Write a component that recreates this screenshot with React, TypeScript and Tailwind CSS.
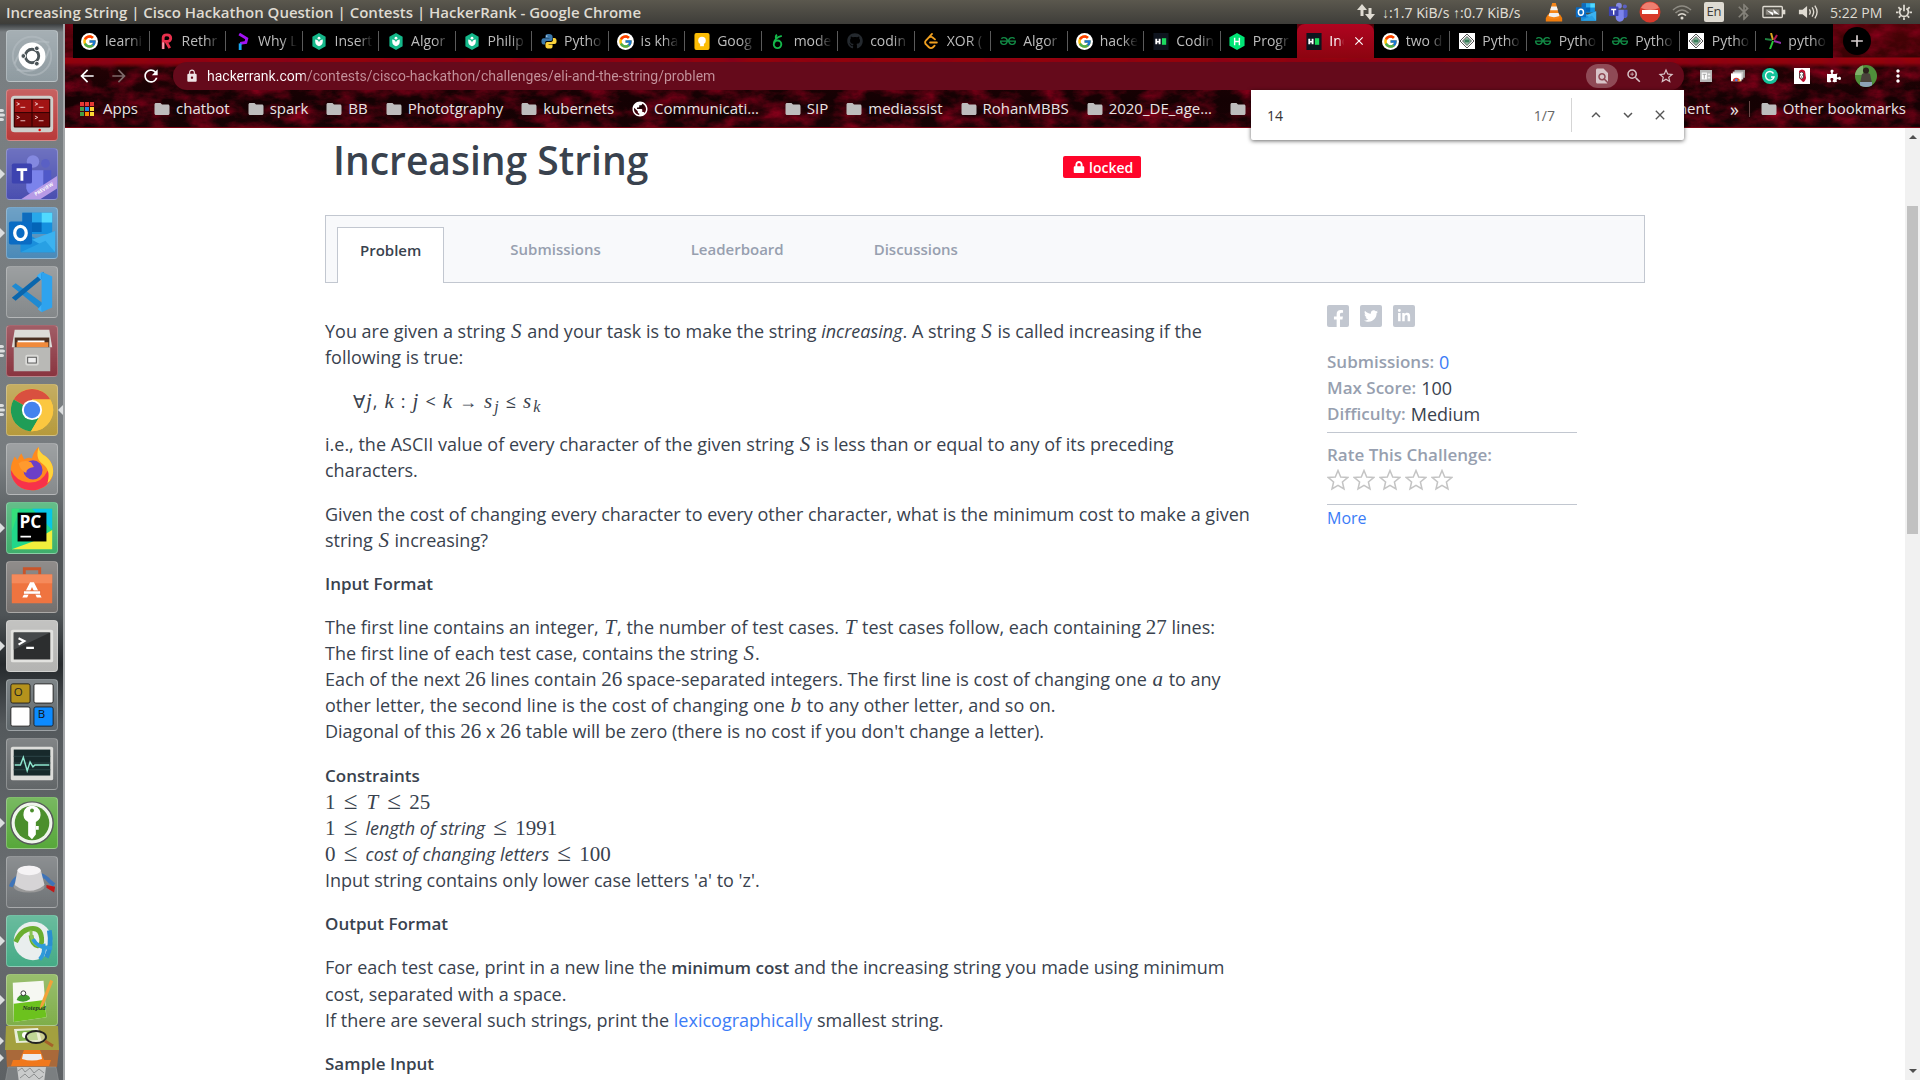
import React, { ReactNode } from "react";
import { FcGoogle } from "react-icons/fc";
import { FaGithub, FaPuzzlePiece, FaLock, FaTwitter, FaFacebookF, FaLinkedinIn } from "react-icons/fa";
import { SiGeeksforgeeks, SiLeetcode } from "react-icons/si";
import {
  MdFolder, MdFindInPage, MdOutlineZoomIn, MdStarOutline, MdMoreVert, MdArrowBack, MdArrowForward, MdRefresh,
  MdLock, MdAdd, MdClose, MdKeyboardArrowUp, MdKeyboardArrowDown, MdBluetooth, MdPublic,
} from "react-icons/md";

/* ---------- shared drawings ---------- */

const OutlookArt = () => (
  <g>
    <path d="M16 5h31v22H16z" fill="#1490df" />
    <path d="M16 5h10v10H16z" fill="#0f6cbd" />
    <path d="M26 5h10v10H26z" fill="#28a8ea" />
    <path d="M36 5h11v10H36z" fill="#50d9ff" />
    <path d="M26 15h10v10H26z" fill="#0364b8" />
    <path d="M14 23l18 10 18-9v22H14z" fill="#1a8fdc" />
    <path d="M50 24v22L26 33z" fill="#3bb2f0" />
    <path d="M14 46l26-12 10 12z" fill="#28a0e4" />
    <rect x="2" y="14" width="24" height="24" rx="2" fill="#0a6cc4" />
    <ellipse cx="14" cy="26" rx="6" ry="7" fill="none" stroke="#fff" strokeWidth="3.4" />
  </g>
);

const TeamsArt = () => (
  <g>
    <circle cx="27" cy="13" r="6.500" fill="#8489e0" />
    <circle cx="40" cy="15" r="4.500" fill="#5a60c4" />
    <path d="M20 22h18v15a9 9 0 0 1-18 4z" fill="#7b83eb" />
    <path d="M38 22h8v12a6 6 0 0 1-8 6z" fill="#5059c9" />
    <rect x="5" y="15" width="21" height="21" rx="2" fill="#3d43b0" />
    <path d="M10 20h11v3h-4v10h-3V23h-4z" fill="#fff" />
  </g>
);

const VlcArt = () => (
  <g>
    <path d="M8 38l5-8h26l5 8v8H8z" fill="#f07c0c" />
    <path d="M22 5h8l9 33q-13 6-26 0z" fill="#f4861a" />
    <path d="M20 13h12l2.500 8h-17zM16 27h20l2 7q-12 5-24 0z" fill="#f2f2f2" />
  </g>
);

/* ---------- top status bar ---------- */

function StatusBar() {
  return (
    <header className="flex h-6 shrink-0 items-center bg-gradient-to-b from-[#5b584e] to-[#3e3d39] pl-1.5 pr-2 font-['Open_Sans',sans-serif] text-[15px] text-[#dfdbd2]">
      <h2 className="flex-1 truncate font-semibold leading-6">Increasing String | Cisco Hackathon Question | Contests | HackerRank - Google Chrome</h2>
      <div className="flex items-center">
        <svg viewBox="0 0 20 16" className="mr-1.5 h-4 w-5" fill="#dfdbd2"><path d="M6 0l5 6H7.500v6h-3V6H1zM14 16l-5-6h3.500V4h3v6H19z" /></svg>
        <span className="w-[156px] whitespace-nowrap font-['Noto_Sans',sans-serif] text-[14px]">↓:1.7 KiB/s ↑:0.7 KiB/s</span>
        <span className="flex w-8 justify-center"><svg viewBox="6 3 40 44" className="h-5 w-5"><VlcArt /></svg></span>
        <span className="flex w-8 justify-center"><svg viewBox="0 3 52 45" className="h-5 w-[22px]"><OutlookArt /></svg></span>
        <span className="flex w-8 justify-center"><svg viewBox="3 5 44 44" className="h-5 w-[22px]"><TeamsArt /></svg></span>
        <span className="flex w-8 justify-center">
          <svg viewBox="0 0 22 22" className="h-[22px] w-[22px]"><circle cx="11" cy="11" r="10.500" fill="#d8392b" /><path d="M2 7a10 10 0 0 1 18 0q-9 4-18 0z" fill="#ef7f70" /><rect x="3" y="9" width="16" height="4" fill="#fff" /></svg>
        </span>
        <span className="flex w-8 justify-center">
          <svg viewBox="0 0 20 16" className="h-4 w-5" fill="none" strokeWidth="1.6"><path d="M1 6q9-8 18 0M3.500 9q6.500-6 13 0" stroke="#8f8c84" /><path d="M6 11.500q4-3.500 8 0" stroke="#dfdbd2" /><circle cx="10" cy="14" r="1.500" fill="#dfdbd2" /></svg>
        </span>
        <span className="mx-1.5 flex h-5 w-5 items-center justify-center rounded-xs bg-[#dfdbd2] text-[13px] text-[#3e3d39]">En</span>
        <MdBluetooth className="mx-1 h-5 w-5 text-[#85827a]" />
        <svg viewBox="0 0 26 16" className="mx-1 h-4 w-6" fill="none" stroke="#dfdbd2" strokeWidth="1.500"><rect x="1" y="2" width="21" height="12" rx="1" /><path d="M24 5.500v5" strokeWidth="2.500" /><rect x="4" y="5" width="15" height="6" fill="#85827a" stroke="none" /><path d="M5 6l8 3-1-4 7 6-7-2 0 3z" fill="#fff" stroke="none" /></svg>
        <svg viewBox="0 0 22 16" className="ml-2 mr-3 h-4 w-5" fill="none" stroke="#dfdbd2" strokeWidth="1.500"><path d="M1 5.500h4l5-4v13l-5-4H1z" fill="#dfdbd2" stroke="none" /><path d="M12.500 5q2 3 0 6M15.500 3q3.500 5 0 10M18.500 1q5 7 0 14" /></svg>
        <span className="w-[54px] whitespace-nowrap text-[14px]">5:22 PM</span>
        <svg viewBox="0 0 20 20" className="ml-3 h-4 w-4" fill="none" stroke="#dfdbd2" strokeWidth="2.200"><path d="M7 5.500a5.500 5.500 0 1 0 6 0M10 1v8M3 4l2 2M17 4l-2 2M0 10.500h3M17 10.500h3M3.500 17l2-2M16.500 17l-2-2M10 17v3" /></svg>
      </div>
    </header>
  );
}

/* ---------- launcher ---------- */

type App = { name: string; tile: string; run?: "one" | "many"; focus?: boolean; art: ReactNode };

const apps: App[] = [
  { name: "Search your computer", tile: "bg-[#8f9ba1]", art: (
    <g><circle cx="26" cy="26" r="20" fill="none" stroke="#b4bdc1" strokeWidth="2" opacity=".6" /><path d="M8 34Q18 6 44 12M44 18Q36 48 10 40" fill="none" stroke="#b9c2c6" strokeWidth="2" opacity=".6" /><circle cx="26" cy="26" r="14" fill="#fff" /><circle cx="26" cy="26" r="7" fill="none" stroke="#4c5559" strokeWidth="3" /><g fill="#4c5559" stroke="#fff" strokeWidth="1"><circle cx="17" cy="26" r="2.500" /><circle cx="31" cy="18" r="2.500" /><circle cx="31" cy="34" r="2.500" /></g></g>) },
  { name: "Terminator", tile: "bg-[#b93a3a]", run: "many", art: (
    <g><rect x="4" y="6" width="44" height="38" rx="4" fill="#cfcfcb" /><rect x="7" y="9" width="38" height="30" rx="1" fill="#2a0000" /><g fill="#a31414"><rect x="8" y="10" width="17.500" height="13" /><rect x="26.500" y="10" width="17.500" height="13" /></g><g fill="#740808"><rect x="8" y="24" width="17.500" height="14" /><rect x="26.500" y="24" width="17.500" height="14" /></g><path d="M10 13l3 1.500-3 1.500M14 18h5M29 13l3 1.500-3 1.500M33 18h5M10 27l3 1.500-3 1.500M14 32h5M29 27l3 1.500-3 1.500M33 32h5" fill="none" stroke="#f0c8c8" /><circle cx="34" cy="41.500" r="1.300" fill="#e00" /></g>) },
  { name: "Microsoft Teams", tile: "bg-[#4a4fb0]", run: "one", art: (
    <g><TeamsArt /><path d="M15 52L52 28v13L35 52z" fill="#b79be6" /><text x="30" y="49" transform="rotate(-32 30 49)" fontSize="5" fontWeight="700" fontFamily="Open Sans" fill="#fff">PREVIEW</text></g>) },
  { name: "Outlook", tile: "bg-[#4b8ab8]", run: "one", art: <OutlookArt /> },
  { name: "Visual Studio Code", tile: "bg-[#84888a]", art: (
    <g><path d="M5 20l4-3 30 22-2 7z" fill="#1f8ad2" /><path d="M5 32l4 3 29-24 0-6z" fill="#0a66ad" /><path d="M36 5l11 5v32l-11 5V36z" fill="#2ea3ee" /><path d="M36 5v42l-4-3 4-5V14l-5-5z" fill="#3db0f8" /></g>) },
  { name: "Files", tile: "bg-[#8a3540]", run: "many", art: (
    <g><path d="M8 4h36l3 18H5z" fill="#dcdcd8" /><rect x="8" y="12" width="36" height="12" fill="#4a2f22" /><path d="M11 15h28v3H11z" fill="#fff" /><path d="M10 17h33v5H10z" fill="#f08a3c" /><path d="M7 22h38v25H7z" fill="#b9b9b6" /><rect x="19" y="30" width="14" height="11" rx="2" fill="#d9d9d6" /><rect x="21.500" y="32.500" width="9" height="6" fill="#eee" stroke="#555" /></g>) },
  { name: "Google Chrome", tile: "bg-[#b69a3c]", run: "many", focus: true, art: (
    <g><circle cx="26" cy="26" r="22" fill="#fbc740" /><path d="M26 26L7 15a22 22 0 0 1 38 0H26z" fill="#d9503f" /><path d="M26 26L7 15a22 22 0 0 0 18 33l10-17z" fill="#1f9d57" /><path d="M26 15h19a22 22 0 0 1-20 33l10-17z" fill="#fbc740" /><circle cx="26" cy="26" r="10.500" fill="#fff" /><circle cx="26" cy="26" r="8.500" fill="#4583ee" /></g>) },
  { name: "Firefox", tile: "bg-[#868a8c]", art: (
    <g><path d="M26 48C12 48 4 38 4 27c0-6 2-10 4-14l3 4c1-3 3-6 4-7l3 6c3-2 6-2 8-1 1-5 4-10 7-12 0 4 3 7 6 9 6 4 9 10 9 16 0 12-10 20-22 20z" fill="#ff8a1e" /><path d="M26 48C12 48 4 38 4 27q6 12 18 13 14 1 20-12 4 4 5 0c1 12-10 20-21 20z" fill="#f7324a" /><path d="M33 3c0 4 3 7 6 9 6 4 9 10 9 16 0 6-3 10-6 13 4-14-2-18-7-22-4-4-4-10-2-16z" fill="#ffd43a" /><circle cx="27" cy="27" r="10" fill="#6b3fc8" /><path d="M12 20q6-4 13-1l3 5q-8 1-8 6-6-2-8-10z" fill="#ff9a2e" /></g>) },
  { name: "PyCharm", tile: "bg-[#3fae6c]", run: "one", art: (
    <g><path d="M5 6h42v42H5z" fill="#21d789" /><path d="M26 6h21v22z" fill="#08c6e6" /><path d="M47 28v20H5l22-8z" fill="#f2ee3c" /><path d="M5 30l8-24H5z" fill="#35e07a" /><rect x="11" y="10" width="30" height="30" fill="#000" /><path d="M14 34h11v2H14z" fill="#fff" /><text x="13" y="26" fontSize="18" fontWeight="700" fontFamily="Open Sans" fill="#fff">PC</text></g>) },
  { name: "Ubuntu Software", tile: "bg-[#74706e]", art: (
    <g><path d="M18 13V7h16v6" fill="none" stroke="#c8552b" strokeWidth="3" /><path d="M5 13h42v30H5z" fill="#ef7440" /><path d="M5 13h42v9H5z" fill="#f58a5b" /><path d="M16 37l8-16h4l8 16h-5l-5-11-5 11z" fill="#fff" /><rect x="17" y="30" width="18" height="3.500" fill="#fff" stroke="#e2602b" strokeWidth=".8" /></g>) },
  { name: "Terminal", tile: "bg-[#b4b4b2]", run: "one", art: (
    <g><rect x="4" y="9" width="44" height="34" rx="2" fill="#e2e2df" /><rect x="7" y="12" width="38" height="28" fill="#2c2e2f" /><path d="M7 12h38L7 30z" fill="#45484a" /><path d="M12 18l6 3-6 3.500M20 28h8" fill="none" stroke="#fff" strokeWidth="2.200" /></g>) },
  { name: "Workspace Switcher", tile: "bg-[#5f676b]", art: (
    <g><g stroke="#222" strokeWidth="1"><rect x="4" y="4" width="20" height="20" rx="2" fill="#b5921c" /><rect x="28" y="4" width="20" height="20" rx="2" fill="#fff" /><rect x="4" y="28" width="20" height="20" rx="2" fill="#fff" /><rect x="28" y="28" width="20" height="20" rx="2" fill="#0d8bff" /></g><text x="7" y="17" fontSize="12" fontFamily="Open Sans" fill="#222">O</text><text x="32" y="40" fontSize="12" fontFamily="Open Sans" fill="#111">B</text></g>) },
  { name: "System Monitor", tile: "bg-[#626668]", art: (
    <g><rect x="4" y="8" width="44" height="35" rx="2" fill="#dcdcd9" /><rect x="7" y="11" width="38" height="27" fill="#17292b" /><path d="M7 18h38M7 25h38M7 32h38" stroke="#2d4648" /><path d="M8 27h6l3-8 4 14 3-9 3 5 2-2h15" fill="none" stroke="#8fe6cf" strokeWidth="1.500" /></g>) },
  { name: "KeePassXC", tile: "bg-[#57a83a]", run: "one", art: (
    <g><circle cx="26" cy="26" r="22" fill="#eef5ea" stroke="#56585a" strokeWidth="1.500" /><circle cx="26" cy="26" r="18" fill="#4b8f2c" /><path d="M26 8a9 9 0 0 1 4 17v13l-4 5-4-4V25a9 9 0 0 1 4-17z" fill="#fff" /><circle cx="26" cy="13" r="2" fill="#4b8f2c" /><path d="M30 29h3v4h-3z" fill="#fff" /></g>) },
  { name: "Volume Control", tile: "bg-[#6f7376]", art: (
    <g><path d="M4 31a22 18 0 0 1 40-6l5 4" fill="none" stroke="#3f74b8" strokeWidth="4" /><path d="M41 29l9 2-1 6-8-5z" fill="#c31818" /><ellipse cx="23" cy="31" rx="16" ry="6" fill="#9a9a9a" /><path d="M8 29l3-16q12-8 24 0l4 16q-15 12-31 0z" fill="#d6d4d6" /><ellipse cx="23" cy="14" rx="12" ry="5" fill="#f5f3f5" /></g>) },
  { name: "Cisco AnyConnect", tile: "bg-[#45ab86]", run: "one", art: (
    <g>
      <circle cx="27" cy="26" r="20" fill="#e9eeee" />
      <path d="M9 27q6-14 18-14 8 0 9 10 1 8-4 8-6-1-7-11" fill="none" stroke="#6aae30" strokeWidth="5" />
      <path d="M25 15q-1 14 10 17 6 2 11-2" fill="none" stroke="#8cc454" strokeWidth="3" />
      <path d="M44 15q3 16-3 28" fill="none" stroke="#2a8fd0" strokeWidth="5" />
      <path d="M27 24q5 10 20 9M34 45q6-6 4-16" fill="none" stroke="#2f9bdb" strokeWidth="4" />
    </g>) },
  { name: "Notepadqq", tile: "bg-[#7fae4a]", run: "one", art: (
    <g><path d="M6 8l32-2 3 38-34 5z" fill="#f6f8f2" /><path d="M7 30l32-4 2 18-34 5z" fill="#6cc21e" /><path d="M10 26q2-6 8-6 6 1 6 5-6 5-14 1z" fill="#3f9a2c" /><circle cx="17" cy="19" r="2.500" fill="#fff" stroke="#333" /><text x="16" y="36" fontSize="7" fontStyle="italic" fontWeight="700" fontFamily="Liberation Serif" fill="#25302a">Notepad</text><path d="M45 5l3 1.500-10 25-4 4 1-5z" fill="#f2a23a" /></g>) },
];

const Running = ({ kind }: { kind: "one" | "many" }) =>
  kind === "one" ? (
    <svg viewBox="0 0 5 10" className="absolute left-0 top-1/2 h-2.5 w-[5px] -translate-y-1/2" fill="#dcdedf"><path d="M0 0l5 5-5 5z" /></svg>
  ) : (
    <svg viewBox="0 0 5 12" className="absolute left-0 top-1/2 h-3 w-[5px] -translate-y-1/2" fill="#dcdedf"><path d="M0 0h2a2 1.500 0 0 1 0 3H0zM0 4.500h3a2 1.500 0 0 1 0 3H0zM0 9h2a2 1.500 0 0 1 0 3H0z" /></svg>
  );

function Launcher() {
  return (
    <nav aria-label="Launcher" className="relative flex w-[65px] shrink-0 flex-col overflow-hidden border-r-2 border-[#a3a6a8] bg-[linear-gradient(to_bottom,#3a3d3e_0px,#7a7f82_8px,#777c7f_440px,#4f5457_520px,#4f5457_590px,#25292c_640px,#54595c_700px,#6a6e71_860px,#5d6164_1056px)] pt-1.5">
      <ul className="flex flex-col gap-[7px]">
        {apps.map((a) => (
          <li key={a.name} className="relative h-[52px]">
            {a.run && <Running kind={a.run} />}
            {a.focus && <svg viewBox="0 0 5 10" className="absolute right-0 top-1/2 h-2.5 w-[5px] -translate-y-1/2" fill="#dcdedf"><path d="M5 0L0 5l5 5z" /></svg>}
            <button aria-label={a.name} className={"ml-1.5 block h-[52px] w-[52px] overflow-hidden rounded-[4px] border border-white/25 bg-gradient-to-b from-white/20 to-transparent " + a.tile}>
              <svg viewBox="0 0 52 52" className="h-full w-full">{a.art}</svg>
            </button>
          </li>
        ))}
      </ul>
      <svg aria-hidden="true" viewBox="0 0 63 57" className="block w-full shrink-0">
        <path d="M6 0h52l1 24H5z" fill="#a3a03f" />
        <path d="M14 3l24-1 4 14-26 1z" fill="#e8eddb" />
        <path d="M17 5l19-1 2 10-19 1z" fill="#7fb34a" />
        <circle cx="25" cy="9" r="3" fill="#fff" />
        <ellipse cx="36" cy="11" rx="10" ry="6" fill="#e9edc8" fillOpacity=".6" stroke="#222" strokeWidth="2" />
        <path d="M45 15l8 5" stroke="#a5622a" strokeWidth="3" />
        <path d="M6 24h53l-2 17H7z" fill="#a9693a" />
        <path d="M13 34h38l-2 6H11z" fill="#f0781c" />
        <path d="M24 24h16l5 12q-13 4-26 0z" fill="#f0781c" />
        <path d="M23 28h18l1 5q-10 3-20 0z" fill="#ececec" />
        <path d="M8 41h48l3 16H5z" fill="#7b7f81" stroke="#9a9d9f" strokeWidth=".5" />
        <path d="M17 41h29l-2 16H19z" fill="#c9cbcb" />
        <path d="M18 45l4-3 3 4 5-4 4 5 5-4 5 4M20 52l5-4 4 4 5-4 5 5 4-3" fill="none" stroke="#8d9090" />
        <path d="M0 11l4 4-4 4zM0 28l4 4-4 4z" fill="#dcdedf" />
      </svg>
    </nav>
  );
}

/* ---------- browser tabs ---------- */

const HexShield = () => (
  <svg viewBox="0 0 16 18" className="h-[17px] w-4"><path d="M8 0l7 4v10l-7 4-7-4V4z" fill="#14b88a" /><path d="M4 7q3 0 4 3 1-3 4-3v2q0 4-4 5-4-1-4-5z" fill="#fff" /><circle cx="8" cy="5.500" r="1.500" fill="#fff" /></svg>
);
const Rethink = () => (
  <svg viewBox="0 0 16 18" className="h-[17px] w-4" fill="none" strokeWidth="3"><path d="M5 17V5q0-3 4-3 4 0 4 3.500T8 9l4 7" stroke="#e8304c" /><path d="M5 17v-7" stroke="#f4a0b0" strokeWidth="2" /></svg>
);
const Purple = () => (
  <svg viewBox="0 0 16 18" className="h-[17px] w-4" fill="none" strokeWidth="3"><path d="M4 1l8 5-1 4-6 1" stroke="#a312f5" /><path d="M5 11v7" stroke="#1aa7f0" /></svg>
);
const Python = () => (
  <svg viewBox="0 0 18 18" className="h-4 w-4"><path d="M9 1c-4 0-4 1.500-4 3v1.500h4.500V6H3C1 6 .500 8 .500 9.500S1 13 3 13h1.500v-2q0-2 2-2h4.500q2 0 2-2V4c0-2-1.500-3-4-3z" fill="#3c78aa" /><path d="M9 17.500c4 0 4-1.500 4-3V13H8.500v-.500H15c2 0 2.500-1.500 2.500-3.500S17 5.500 15 5.500h-1.500V8q0 2-2 2H7q-2 0-2 2v2.500c0 2 1.500 3 4 3z" fill="#fdd43b" /><circle cx="6.500" cy="3.500" r=".8" fill="#fff" /></svg>
);
const Keep = () => (
  <svg viewBox="0 0 16 18" className="h-[17px] w-4"><rect width="16" height="18" rx="2" fill="#fbbc04" /><circle cx="8" cy="8" r="4" fill="#fff" /><path d="M6 11h4v3H6z" fill="#fff" /></svg>
);
const Leaf = () => (
  <svg viewBox="0 0 16 18" className="h-[17px] w-4" fill="none" stroke="#14b84a" strokeWidth="2"><circle cx="7.500" cy="12" r="4" /><path d="M4 11Q4 5 12 3M6 6q-1-3 1-4" /></svg>
);
const HI = () => (
  <svg viewBox="0 0 16 18" className="h-[17px] w-4"><rect width="16" height="18" fill="#0e141e" /><path d="M2 6h2v2.500h1.500V6h2v6h-2v-2H4v2H2z" fill="#fff" /><path d="M9 5.500h4.500v7H9z" fill="#1ddb5f" /></svg>
);
const RankHex = () => (
  <svg viewBox="0 0 16 18" className="h-[17px] w-4"><path d="M8 0l8 4.500v9L8 18l-8-4.500v-9z" fill="#00e676" /><path d="M5.500 5v8M10.500 5v8M5.500 9h5" stroke="#fff" strokeWidth="1.500" /></svg>
);
const Diamond = () => (
  <svg viewBox="0 0 16 16" className="h-4 w-4"><rect width="16" height="16" fill="#fff" /><path d="M8 1l7 7-7 7-7-7z" fill="none" stroke="#555" /><path d="M8 3.500L12.500 8 8 12.500 3.500 8z" fill="#8fb8a0" stroke="#333" strokeWidth=".7" /><path d="M5.500 8h5M7 6.500v3M9 6.500v3" stroke="#1f6b45" /></svg>
);
const Burst = () => (
  <svg viewBox="0 0 16 16" className="h-4 w-4" fill="none" strokeWidth="2"><path d="M8 7L6 0" stroke="#d8a820" /><path d="M9 7l3-5" stroke="#b01850" /><path d="M9 8l7 2" stroke="#9030a8" /><path d="M8 8l-3 8" stroke="#28c838" /><path d="M7 7L0 6" stroke="#208040" /></svg>
);
const G = () => <FcGoogle className="h-[17px] w-[17px] rounded-full bg-white p-px" />;
const Gfg = () => <SiGeeksforgeeks className="h-4 w-4 text-[#128a45]" />;

const tabs: { label: string; icon: ReactNode; active?: boolean }[] = [
  { label: "learni", icon: <G /> },
  { label: "Rethr", icon: <Rethink /> },
  { label: "Why L", icon: <Purple /> },
  { label: "Insert", icon: <HexShield /> },
  { label: "Algor", icon: <HexShield /> },
  { label: "Philip", icon: <HexShield /> },
  { label: "Pytho", icon: <Python /> },
  { label: "is kha", icon: <G /> },
  { label: "Goog", icon: <Keep /> },
  { label: "mode", icon: <Leaf /> },
  { label: "codin", icon: <FaGithub className="h-4 w-4 text-[#24292e]" /> },
  { label: "XOR (", icon: <SiLeetcode className="h-4 w-4 text-[#f0a020]" /> },
  { label: "Algor", icon: <Gfg /> },
  { label: "hacke", icon: <G /> },
  { label: "Codin", icon: <HI /> },
  { label: "Progr", icon: <RankHex /> },
  { label: "Inc", icon: <HI />, active: true },
  { label: "two d", icon: <G /> },
  { label: "Pytho", icon: <Diamond /> },
  { label: "Pytho", icon: <Gfg /> },
  { label: "Pytho", icon: <Gfg /> },
  { label: "Pytho", icon: <Diamond /> },
  { label: "pytho", icon: <Burst /> },
];

function TabStrip() {
  return (
    <div className="relative flex h-[34px] items-stretch pl-2">
      <div role="tablist" aria-label="Open tabs" className="flex min-w-0 flex-1">
        {tabs.map((t, i) => {
          const plain = !t.active && i < tabs.length - 1 && !tabs[i + 1].active;
          return (
            <button
              key={i}
              role="tab"
              aria-selected={!!t.active}
              className={
                "flex min-w-0 flex-1 basis-0 items-center " +
                (t.active ? "rounded-t-lg bg-gradient-to-b from-[#b00420] to-[#8c0410] text-white" : "bg-black text-[#bdbdbd]")
              }
            >
              <span className="ml-2 flex w-[17px] shrink-0 justify-center">{t.icon}</span>
              <span className="ml-[7px] min-w-0 flex-1 overflow-hidden whitespace-nowrap text-left text-[14px] leading-6 [mask-image:linear-gradient(to_right,black_60%,transparent)]">{t.label}</span>
              {t.active ? <MdClose className="mx-2 h-3.5 w-3.5 shrink-0" /> : <span className={"ml-[5px] h-5 w-px shrink-0 " + (plain ? "bg-[#5a5a5a]" : "")} />}
            </button>
          );
        })}
      </div>
      <div className="flex w-[87px] items-center pl-2.5">
        <button aria-label="New tab" className="flex h-7 w-7 items-center justify-center rounded-full bg-black text-[#d8d0d0]"><MdAdd className="h-5 w-5" /></button>
      </div>
    </div>
  );
}

/* ---------- toolbar and bookmarks ---------- */

const Cell = ({ label, children }: { label: string; children: ReactNode }) => (
  <button aria-label={label} className="flex h-7 w-8 items-center justify-center text-white">{children}</button>
);

function Toolbar() {
  return (
    <div className="relative flex h-8 items-center pl-1.5 pt-1 pr-1.5">
      <Cell label="Back"><MdArrowBack className="h-5 w-5" /></Cell>
      <Cell label="Forward"><MdArrowForward className="h-5 w-5 text-[#7d6a6a]" /></Cell>
      <Cell label="Reload"><MdRefresh className="h-5 w-5" /></Cell>
      <div className="ml-1.5 flex h-7 min-w-0 flex-1 items-center rounded-full bg-[#650a1b] pl-3 pr-0.5">
        <MdLock className="h-3.5 w-3.5 text-[#efe4e6]" />
        <input
          aria-label="Address"
          className="ml-2 min-w-0 flex-1 bg-[linear-gradient(to_right,#ffffff_98px,#c4949d_98px)] bg-clip-text font-[Roboto,sans-serif] text-[14px] text-transparent outline-none"
          defaultValue="hackerrank.com/contests/cisco-hackathon/challenges/eli-and-the-string/problem"
        />
        <button aria-label="Find in page" className="flex h-6 w-8 items-center justify-center rounded-full bg-[#8f4a56] text-[#d8c4c8]"><MdFindInPage className="h-[18px] w-[18px]" /></button>
        <button aria-label="Zoom" className="flex w-8 justify-center text-[#d8c4c8]"><MdOutlineZoomIn className="h-[18px] w-[18px]" /></button>
        <button aria-label="Bookmark this page" className="flex w-8 justify-center text-[#d8c4c8]"><MdStarOutline className="h-[18px] w-[18px]" /></button>
      </div>
      <div className="ml-1.5 flex">
        <Cell label="Office"><svg viewBox="0 0 14 14" className="h-3 w-3"><rect width="14" height="14" fill="#b8b8b8" /><path d="M2 3h6v8H2z" fill="#fff" /><path d="M3 5h4M5 5v5" stroke="#999" /><path d="M9 4h3v2H9zM9 8h3v2H9z" fill="#eee" /></svg></Cell>
        <Cell label="Screen capture"><svg viewBox="0 0 16 16" className="h-3.5 w-3.5"><path d="M4 1h12v9H4z" fill="#999" /><path d="M2 3h12v9H2z" fill="#ccc" /><path d="M0 5h12v9H0z" fill="#fff" /><path d="M2 14a4 4 0 0 1 8 0z" fill="#e03a2f" /><circle cx="6" cy="12.500" r="1.500" fill="#3f7ee8" /><path d="M8 14l2-3 1 3z" fill="#f4c020" /></svg></Cell>
        <Cell label="Grammarly"><svg viewBox="0 0 16 16" className="h-4 w-4"><circle cx="8" cy="8" r="8" fill="#15c39a" /><path d="M11.500 5.500A4.300 4.300 0 1 0 12 9H9" fill="none" stroke="#fff" strokeWidth="1.400" /></svg></Cell>
        <Cell label="Mask"><svg viewBox="0 0 16 16" className="h-4 w-4"><rect width="16" height="16" fill="#fff" /><path d="M5 3q3-3 6 0l1 7q-1 4-3 4l-4-4z" fill="#c01030" /><path d="M5.500 5q2-2 4 0v4q-1 2-2 2T5.500 9z" fill="#fff" stroke="#222" strokeWidth=".7" /><path d="M6 7h1M8 7h1M7 9h1" stroke="#222" strokeWidth=".8" /></svg></Cell>
        <Cell label="Extensions"><FaPuzzlePiece className="h-3.5 w-3.5" /></Cell>
        <Cell label="Profile"><svg viewBox="0 0 22 22" className="h-[22px] w-[22px]"><clipPath id="av"><circle cx="11" cy="11" r="11" /></clipPath><g clipPath="url(#av)"><rect width="22" height="22" fill="#4f8f3a" /><path d="M0 0h8v10H0z" fill="#7fae6a" /><path d="M5 18l2-9q4-3 8 0l2 9z" fill="#4a443c" /><circle cx="11" cy="5.500" r="3" fill="#2b211c" /><path d="M5 17h12v6H5z" fill="#8ea3b8" /></g></svg></Cell>
        <Cell label="Menu"><MdMoreVert className="h-5 w-5" /></Cell>
      </div>
    </div>
  );
}

const bookmarks = ["chatbot", "spark", "BB", "Phototgraphy", "kubernets", "@Communicati…", "SIP", "mediassist", "RohanMBBS", "2020_DE_age…"];
const Folder = () => <MdFolder className="h-[18px] w-[18px] shrink-0 text-[#bdbdbd]" />;

function Bookmarks() {
  const grid = ["#e53935", "#e53935", "#e53935", "#43a047", "#1e88e5", "#fdd835", "#43a047", "#fb8c00", "#fdd835"];
  return (
    <div className="relative flex h-[37px] items-center pl-[15px] pr-3.5 text-[15px] text-[#e8e4e4]">
      <a href="#" className="mr-[15px] flex items-center gap-[9px]">
        <svg viewBox="0 0 14 14" className="h-3.5 w-3.5">{grid.map((c, i) => <rect key={i} x={(i % 3) * 5} y={Math.floor(i / 3) * 5} width="4" height="4" fill={c} />)}</svg>
        Apps
      </a>
      <div className="flex min-w-0 flex-1 items-center gap-[17px] overflow-hidden whitespace-nowrap">
        {bookmarks.map((b) => (
          <a key={b} href="#" className={"flex shrink-0 items-center gap-[5px] " + (b[0] === "@" ? "pr-2" : "")}>
            {b[0] === "@" ? <MdPublic className="h-[18px] w-[18px] text-white" /> : <Folder />}
            {b.replace("@", "")}
          </a>
        ))}
        <a href="#" aria-label="More folders" className="shrink-0"><Folder /></a>
      </div>
      <span className="w-8 text-right">nent</span>
      <button aria-label="More bookmarks" className="ml-5 text-[18px] leading-none">»</button>
      <span className="ml-2.5 h-4 w-px bg-[#6a4a4a]" />
      <a href="#" className="ml-2.5 flex items-center gap-[5px]"><Folder />Other bookmarks</a>
    </div>
  );
}

function FindBar() {
  return (
    <form className="absolute right-[236px] top-[66px] z-10 flex h-[50px] w-[433px] items-center rounded-b-xs bg-white pl-4 pr-2 text-[14px] text-[#333] shadow-[0_1px_4px_rgba(0,0,0,0.6)]">
      <input aria-label="Find" defaultValue="14" className="min-w-0 flex-1 bg-transparent outline-none" />
      <span className="text-[#666]">1/7</span>
      <span className="ml-4 mr-2 h-[34px] w-px bg-[#d5d5d5]" />
      <button type="button" aria-label="Previous" className="flex w-8 justify-center text-[#555]"><MdKeyboardArrowUp className="h-[18px] w-[18px]" /></button>
      <button type="button" aria-label="Next" className="flex w-8 justify-center text-[#555]"><MdKeyboardArrowDown className="h-[18px] w-[18px]" /></button>
      <button type="button" aria-label="Close" className="flex w-8 justify-center text-[#555]"><MdClose className="h-4 w-4" /></button>
    </form>
  );
}

function BrowserChrome() {
  return (
    <div className="relative z-10 shrink-0 border-b border-[#7a0512] bg-[linear-gradient(to_bottom,#4a0206_0px,#3a0205_33px,#9a020c_34px,#8e020b_39px,#220204_44px,#140103_75px,#170204_104px)] font-['Open_Sans',sans-serif]">
      <svg aria-hidden="true" className="absolute inset-0 h-full w-full">
        <filter id="grain"><feTurbulence type="fractalNoise" baseFrequency="0.04 0.07" numOctaves="5" seed="8" /><feColorMatrix values="0 0 0 0 0.24  0 0 0 0 0  0 0 0 0 0.01  1.8 0 0 0 -0.65" /></filter>
        <rect width="100%" height="100%" filter="url(#grain)" />
      </svg>
      <TabStrip />
      <Toolbar />
      <Bookmarks />
      <FindBar />
    </div>
  );
}

/* ---------- challenge page ---------- */

const M = ({ children }: { children: ReactNode }) => <span className="px-px font-['Liberation_Serif',serif] text-[21px] italic leading-none">{children}</span>;
const N = ({ children }: { children: ReactNode }) => <span className="font-['Liberation_Serif',serif] text-[21px] leading-none">{children}</span>;
const Sub = ({ children }: { children: ReactNode }) => <sub className="px-px font-['Liberation_Serif',serif] text-[16px] italic">{children}</sub>;
const Le = () => <span className="mx-1.5 inline-block w-[18px] text-center font-['Liberation_Serif',serif] text-[25px] leading-4">≤</span>;
const Head = ({ children }: { children: ReactNode }) => <h3 className="mb-[17px] text-[17px] font-semibold leading-[26px]">{children}</h3>;
const P = ({ children }: { children: ReactNode }) => <p className="mb-[18px]">{children}</p>;

function Article() {
  return (
    <article className="max-w-[936px] min-w-0 flex-1 pt-[35px] text-[18px] leading-[26px] text-[#39424e]">
      <P>You are given a string <M>S</M> and your task is to make the string <em>increasing</em>. A string <M>S</M> is called increasing if the following is true:</P>
      <p className="mb-[17px] ml-7 flex items-baseline gap-1.5">
        <span>∀<M>j</M>,</span><M>k</M><span>:</span><M>j</M><span>&lt;</span><M>k</M><span>→</span>
        <span><M>s</M><Sub>j</Sub></span><span>≤</span><span><M>s</M><Sub>k</Sub></span>
      </p>
      <P>i.e., the ASCII value of every character of the given string <M>S</M> is less than or equal to any of its preceding characters.</P>
      <P>Given the cost of changing every character to every other character, what is the minimum cost to make a given string <M>S</M> increasing?</P>
      <Head>Input Format</Head>
      <P>
        The first line contains an integer, <M>T</M>, the number of test cases. <M>T</M> test cases follow, each containing <N>27</N> lines:<br />
        The first line of each test case, contains the string <M>S</M>.<br />
        Each of the next <N>26</N> lines contain <N>26</N> space-separated integers. The first line is cost of changing one <M>a</M> to any other letter, the second line is the cost of changing one <M>b</M> to any other letter, and so on.<br />
        Diagonal of this <N>26</N> x <N>26</N> table will be zero (there is no cost if you don't change a letter).
      </P>
      <P>
        <strong className="text-[17px] font-semibold">Constraints</strong><br />
        <N>1</N><Le /><M>T</M><Le /><N>25</N><br />
        <N>1</N><Le /><em>length of string</em><Le /><N>1991</N><br />
        <N>0</N><Le /><em>cost of changing letters</em><Le /><N>100</N><br />
        Input string contains only lower case letters 'a' to 'z'.
      </P>
      <Head>Output Format</Head>
      <P>
        For each test case, print in a new line the <strong className="text-[17px] font-semibold">minimum cost</strong> and the increasing string you made using minimum cost, separated with a space.<br />
        If there are several such strings, print the <a href="#" className="text-[#3b7cf7]">lexicographically</a> smallest string.
      </P>
      <Head>Sample Input</Head>
    </article>
  );
}

const Social = ({ label, children }: { label: string; children: ReactNode }) => (
  <a href="#" aria-label={label} className="flex h-[22px] w-[22px] items-end justify-center rounded-xs bg-[#c2c7d0] text-white">{children}</a>
);
const Key = ({ children }: { children: ReactNode }) => <dt className="text-[17px] font-semibold text-[#979faf]">{children}</dt>;

function Sidebar() {
  return (
    <aside className="mr-[68px] w-[250px] shrink-0 pt-[22px] text-[18px] leading-[26px] text-[#39424e]">
      <div className="mb-[22px] flex gap-[11px]">
        <Social label="Facebook"><FaFacebookF className="h-[17px] w-[17px]" /></Social>
        <Social label="Twitter"><FaTwitter className="mb-1 h-3.5 w-3.5" /></Social>
        <Social label="LinkedIn"><FaLinkedinIn className="mb-1 h-3.5 w-3.5" /></Social>
      </div>
      <dl className="border-b border-[#c2c7d0] pb-[5px]">
        <div className="flex gap-[5px]"><Key>Submissions:</Key><dd className="text-[#3b7cf7]">0</dd></div>
        <div className="flex gap-[5px]"><Key>Max Score:</Key><dd>100</dd></div>
        <div className="flex gap-[5px]"><Key>Difficulty:</Key><dd>Medium</dd></div>
      </dl>
      <div className="border-b border-[#c2c7d0] pb-3 pt-[9px]">
        <h3 className="text-[17px] font-semibold text-[#979faf]">Rate This Challenge:</h3>
        <div className="flex gap-1">
          {[1, 2, 3, 4, 5].map((n) => (
            <button key={n} aria-label={"Rate " + n} className="flex h-6 w-[22px] items-center">
              <svg viewBox="0 0 22 22" className="w-[22px]"><path d="M11 1.500l2.700 6.500 7 .5-5.300 4.500 1.600 7L11 16.300 5 20l1.600-7L1.300 8.500l7-.5z" fill="none" stroke="#c4c4c4" strokeWidth="1.500" /></svg>
            </button>
          ))}
        </div>
      </div>
      <a href="#" className="block text-[16px] text-[#3b7cf7]">More</a>
    </aside>
  );
}

function ChallengePage() {
  return (
    <main className="min-w-0 flex-1 overflow-hidden bg-white font-['Open_Sans',sans-serif]">
      <div className="mx-auto max-w-[1320px]">
        <div className="flex pl-2 pt-2">
          <h1 className="w-[730px] text-[39px] font-semibold leading-[48px] text-[#39424e]">Increasing String</h1>
          <span className="mt-5 flex h-[22px] items-center gap-1 rounded-xs bg-[#ff052a] pl-2.5 pr-2 text-[14px] font-semibold text-white"><FaLock className="h-3 w-3" />locked</span>
        </div>
        <nav className="mt-[31px] flex h-[68px] items-end gap-[42px] border border-[#c2c7d0] bg-[#f8f9fb] pl-[11px] text-[15px] font-semibold text-[#979faf]">
          <a href="#" className="-mb-px h-14 border border-b-0 border-[#c2c7d0] bg-white px-[22px] pt-2.5 leading-6 text-[#39424e]">Problem</a>
          <a href="#" className="h-[55px] px-6 pt-2.5 leading-6">Submissions</a>
          <a href="#" className="h-[55px] px-6 pt-2.5 leading-6">Leaderboard</a>
          <a href="#" className="h-[55px] px-6 pt-2.5 leading-6">Discussions</a>
        </nav>
        <div className="flex justify-between">
          <Article />
          <Sidebar />
        </div>
      </div>
    </main>
  );
}

function Scrollbar() {
  return (
    <div aria-hidden="true" className="flex w-[15px] shrink-0 flex-col items-center justify-between bg-[#f1f1f1] py-[7px]">
      <div className="flex flex-col items-center gap-[67px]">
        <span className="h-0 w-0 border-x-4 border-b-4 border-x-transparent border-b-[#505050]" />
        <span className="h-[328px] w-[11px] bg-[#c1c1c1]" />
      </div>
      <span className="h-0 w-0 border-x-4 border-t-4 border-x-transparent border-t-[#505050]" />
    </div>
  );
}

export default function App() {
  return (
    <div className="flex h-screen flex-col overflow-hidden">
      <StatusBar />
      <div className="flex min-h-0 flex-1">
        <Launcher />
        <div className="flex min-w-0 flex-1 flex-col">
          <BrowserChrome />
          <div className="flex min-h-0 flex-1">
            <ChallengePage />
            <Scrollbar />
          </div>
        </div>
      </div>
    </div>
  );
}
